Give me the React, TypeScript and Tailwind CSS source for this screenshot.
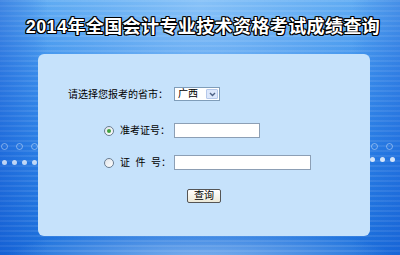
import { useState } from "react";

const title = "2014年全国会计专业技术资格考试成绩查询";

function Radio({ checked, onClick }: { checked: boolean; onClick: () => void }) {
  return (
    <button
      type="button"
      onClick={onClick}
      className="flex h-[10px] w-[10px] items-center justify-center rounded-full border border-[#6b7d90] bg-[linear-gradient(135deg,#dfe3e8,#ffffff)]"
    >
      {checked && <span className="h-[4px] w-[4px] rounded-full bg-[#3fa23f]" />}
    </button>
  );
}

export default function App() {
  const [mode, setMode] = useState<"zkz" | "zj">("zkz");

  return (
    <div className="relative h-[255px] w-[400px] overflow-hidden bg-[linear-gradient(180deg,#5aa8f2_0%,#3b8fec_30%,#2a80e6_60%,#1c70dc_100%)] font-['Liberation_Sans','Noto_Sans_CJK_SC',sans-serif]">
      {/* background stripes + glow */}
      <div className="absolute inset-0 bg-[repeating-linear-gradient(180deg,rgba(255,255,255,0.10)_0px,rgba(255,255,255,0.10)_2px,transparent_2px,transparent_5px)]" />
      <div className="absolute inset-0 bg-[radial-gradient(ellipse_at_50%_0%,rgba(190,225,255,0.45),transparent_60%)]" />
      <div className="absolute inset-0 bg-[linear-gradient(90deg,rgba(10,70,200,0.35),transparent_12%,transparent_88%,rgba(10,70,200,0.25))]" />
      <div className="absolute inset-x-0 bottom-0 h-[30px] bg-[radial-gradient(ellipse_at_50%_120%,rgba(220,240,255,0.55),transparent_70%)]" />

      {/* side decorations */}
      <div className="absolute left-[1px] top-[143px] flex gap-[8px]">
        <span className="h-[7px] w-[7px] rounded-full border border-white/40" />
        <span className="h-[7px] w-[7px] rounded-full border border-white/40" />
        <span className="h-[7px] w-[7px] rounded-full border border-white/40" />
      </div>
      <div className="absolute left-[2px] top-[160px] flex gap-[5px]">
        <span className="h-[5px] w-[5px] rounded-full bg-white/70" />
        <span className="h-[5px] w-[5px] rounded-full bg-white/70" />
        <span className="h-[5px] w-[5px] rounded-full bg-white/70" />
        <span className="h-[5px] w-[5px] rounded-full bg-white/70" />
      </div>
      <div className="absolute left-[371px] top-[143px] flex gap-[8px]">
        <span className="h-[7px] w-[7px] rounded-full border border-white/40" />
        <span className="h-[7px] w-[7px] rounded-full border border-white/40" />
      </div>
      <div className="absolute left-[370px] top-[157px] flex gap-[5px]">
        <span className="h-[5px] w-[5px] rounded-full bg-white/80" />
        <span className="h-[5px] w-[5px] rounded-full bg-white/80" />
        <span className="h-[5px] w-[5px] rounded-full bg-white/80" />
        <span className="h-[5px] w-[5px] rounded-full bg-white/80" />
      </div>

      <div className="relative flex flex-col">
        {/* title */}
        <div className="flex h-[54px] items-center justify-center pb-[1px] pl-[6px]">
          <h1 className="font-['Liberation_Sans','Noto_Sans_CJK_SC',sans-serif] text-[18px] font-bold leading-none tracking-[0.4px] text-white [text-shadow:1px_0_0_#000,-1px_0_0_#000,0_1px_0_#000,0_-1px_0_#000,1px_1px_0_#000,-1px_-1px_0_#000,1px_-1px_0_#000,-1px_1px_0_#000]">
            {title}
          </h1>
        </div>

        {/* panel */}
        <div className="ml-[38px] flex h-[182px] w-[332px] flex-col rounded-[6px] bg-[#c6e2fb] text-[10px] text-black">
          <div className="mt-[33px] flex h-[14px] items-center pl-[30px]">
            <span className="w-[106px]">请选择您报考的省市：</span>
            <div className="flex h-[14px] w-[46px] items-center justify-between border border-[#7f9db9] bg-white pl-[3px] pr-[1px]">
              <span className="leading-none">广西</span>
              <span className="flex h-[10px] w-[12px] items-center justify-center rounded-[1px] border border-[#b5c8ea] bg-[#dce7fb]">
                <svg width="7" height="5" viewBox="0 0 7 5">
                  <path d="M1 1 L3.5 3.5 L6 1" fill="none" stroke="#4d6185" strokeWidth="1.4" />
                </svg>
              </span>
            </div>
          </div>

          <div className="mt-[22px] flex h-[15px] items-center pl-[66px]">
            <Radio checked={mode === "zkz"} onClick={() => setMode("zkz")} />
            <span className="ml-[6px] w-[54px]">准考证号：</span>
            <input className="h-[15px] w-[86px] border border-[#8c9fb5] bg-white outline-none" />
          </div>

          <div className="mt-[17px] flex h-[15px] items-center pl-[66px]">
            <Radio checked={mode === "zj"} onClick={() => setMode("zj")} />
            <span className="ml-[6px] w-[54px] whitespace-pre">证  件  号：</span>
            <input className="h-[15px] w-[137px] border border-[#8c9fb5] bg-white outline-none" />
          </div>

          <div className="mt-[19px] pl-[149px]">
            <button
              type="button"
              className="flex h-[14px] w-[34px] items-center justify-center rounded-[2px] border border-[#555] bg-[linear-gradient(180deg,#ffffff,#ece9d8)] text-[10px] leading-none"
            >
              查询
            </button>
          </div>
        </div>
      </div>
    </div>
  );
}
